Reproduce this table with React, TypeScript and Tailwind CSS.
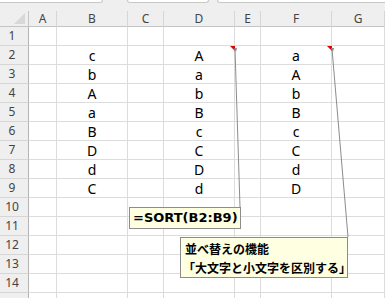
import React from 'react';

// column widths of the sheet: row-number gutter, then A..G
const COLS = ['A', 'B', 'C', 'D', 'E', 'F', 'G'];
const ROW_COUNT = 14;

// values in B, D and F for rows 2..9
const values: Record<number, [string, string, string]> = {
  2: ['c', 'A', 'a'],
  3: ['b', 'a', 'A'],
  4: ['A', 'b', 'b'],
  5: ['a', 'B', 'B'],
  6: ['B', 'c', 'c'],
  7: ['D', 'C', 'C'],
  8: ['d', 'D', 'd'],
  9: ['C', 'd', 'D'],
};

function cellText(row: number, col: number) {
  const v = values[row];
  if (!v) return '';
  if (col === 2) return v[0];
  if (col === 4) return v[1];
  if (col === 6) return v[2];
  return '';
}

export default function App() {
  // one extra row at the bottom that is scrolled half out of view
  const rows = Array.from({ length: ROW_COUNT + 2 }, (_, i) => i);

  return (
    <div className="relative w-[385px] h-[298px] overflow-hidden bg-[#efefef] font-['Noto_Sans','Noto_Sans_CJK_JP',sans-serif]">
      {/* formula bar edges */}
      <div className="flex h-[3px]">
        <div className="w-[103px] bg-white border-b border-r border-[#c8c8c8] rounded-br-[3px]" />
        <div className="ml-[24px] w-[82px] bg-white border-b border-l border-r border-[#c8c8c8] rounded-b-[3px]" />
        <div className="ml-[8px] flex-1 bg-white border-b border-l border-[#c8c8c8] rounded-bl-[3px]" />
      </div>
      <div className="h-[8px]" />

      {/* sheet */}
      <div className="grid grid-cols-[29px_28px_71px_36px_71px_26px_71px_1fr] grid-rows-[16px] auto-rows-[19px]">
        {rows.map((r) =>
          [0, 1, 2, 3, 4, 5, 6, 7].map((c) => {
            if (r === 0 && c === 0) {
              return (
                <div key={`${r}-${c}`} className="relative bg-[#efefef] border-r border-b border-[#c4c4c4]">
                  <svg className="absolute left-0 top-0" width="29" height="16">
                    <polygon points="14,13 25,13 25,2" fill="#d8d8d8" />
                  </svg>
                </div>
              );
            }
            if (r === 0) {
              return (
                <div
                  key={`${r}-${c}`}
                  className="flex items-center justify-center bg-[#efefef] border-r border-r-[#d6d6d6] border-b border-b-[#c4c4c4] text-[12px] text-[#444]"
                >
                  {COLS[c - 1]}
                </div>
              );
            }
            if (c === 0) {
              return (
                <div
                  key={`${r}-${c}`}
                  className="flex items-center justify-center pr-[4px] bg-[#efefef] border-r border-r-[#b4b4b4] border-b border-b-[#d6d6d6] text-[12px] text-[#444]"
                >
                  {r <= ROW_COUNT ? r : ''}
                </div>
              );
            }
            return (
              <div
                key={`${r}-${c}`}
                className="flex items-center justify-center bg-white border-r border-b border-[#dcdcdc] text-[14px] text-black"
              >
                {cellText(r, c)}
              </div>
            );
          })
        )}
      </div>

      {/* comment markers and leader lines */}
      <svg className="absolute left-0 top-0 pointer-events-none" width="385" height="298">
        <polygon points="230,46 235,46 235,51" fill="#e00000" />
        <polygon points="327,46 332,46 332,51" fill="#e00000" />
        <line x1="235" y1="49" x2="240" y2="207" stroke="#8c8c8c" strokeWidth="1" />
        <line x1="332" y1="49" x2="348" y2="237" stroke="#8c8c8c" strokeWidth="1" />
        <polygon points="234,48 237,48 236,52" fill="#8c8c8c" />
        <polygon points="331,48 334,48 333,52" fill="#8c8c8c" />
      </svg>

      {/* comments */}
      <div className="absolute left-[129px] top-[207px] w-[112px] h-[22px] flex items-center pl-[3px] bg-[#ffffe1] border border-[#8c8c8c] text-[13px] font-bold text-black font-['DejaVu_Sans','Noto_Sans_CJK_JP',sans-serif]">
        =SORT(B2:B9)
      </div>
      <div className="absolute left-[180px] top-[237px] w-[168px] h-[41px] flex flex-col justify-center pl-[4px] bg-[#ffffe1] border border-[#8c8c8c] text-[12px] leading-[19px] font-bold text-black font-['Noto_Sans_CJK_JP',sans-serif]">
        <span>並べ替えの機能</span>
        <span className="-ml-[2px]">「大文字と小文字を区別する」</span>
      </div>
    </div>
  );
}
